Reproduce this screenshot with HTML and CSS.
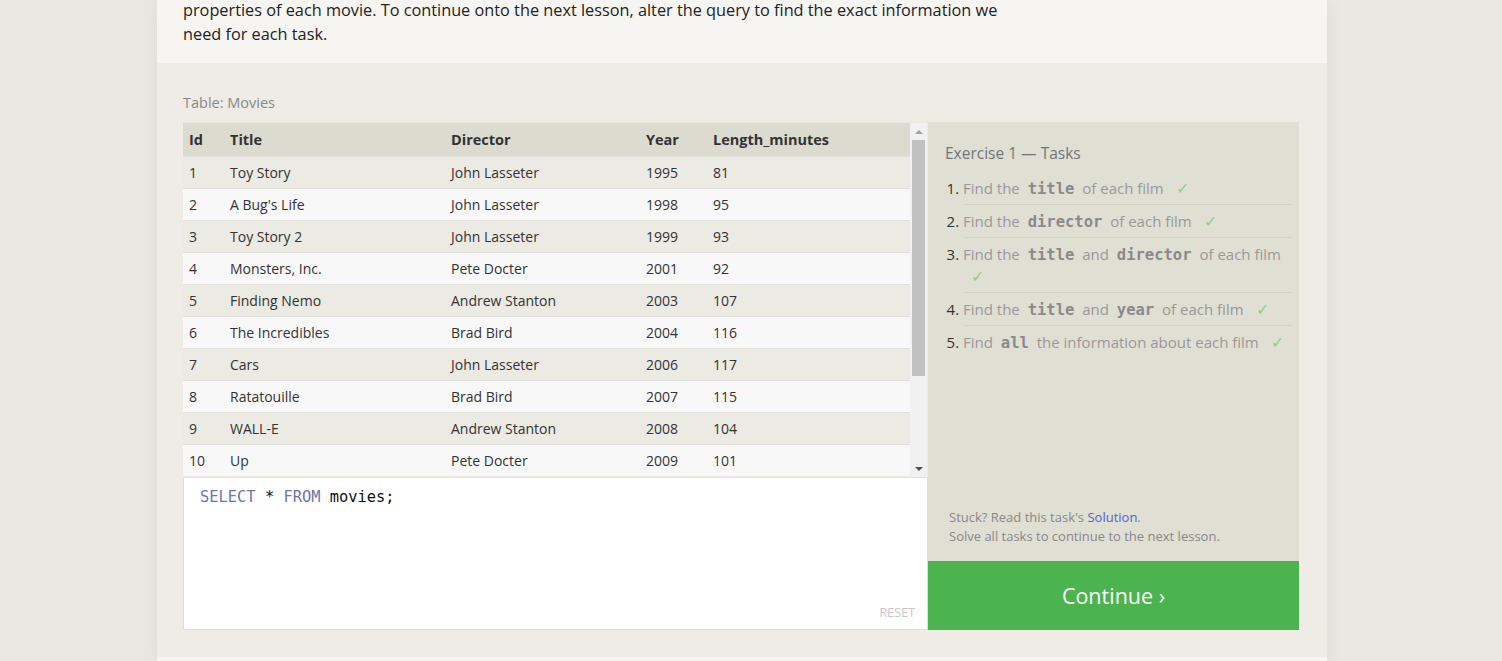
FILE: index.html
```html
<!DOCTYPE html>
<html lang="en">
<head>
<meta charset="utf-8">
<title>SQL Lesson 1</title>
<link rel="stylesheet" href="styles.css">
</head>
<body>
<div class="page">
  <section class="intro">
    <p class="intro-text">properties of each movie. To continue onto the next lesson, alter the query to find the exact information we<br>need for each task.</p>
  </section>
  <section class="exercise">
    <div class="table-caption">Table: Movies</div>
    <div class="workspace">
      <div class="left-col">
        <div class="table-view">
          <div class="table-clip">
            <table class="data">
              <colgroup><col class="c-id"><col class="c-title"><col class="c-dir"><col class="c-year"><col class="c-len"></colgroup>
              <thead>
                <tr><th>Id</th><th>Title</th><th>Director</th><th>Year</th><th>Length_minutes</th></tr>
              </thead>
              <tbody>
                <tr><td>1</td><td>Toy Story</td><td>John Lasseter</td><td>1995</td><td>81</td></tr>
                <tr><td>2</td><td>A Bug's Life</td><td>John Lasseter</td><td>1998</td><td>95</td></tr>
                <tr><td>3</td><td>Toy Story 2</td><td>John Lasseter</td><td>1999</td><td>93</td></tr>
                <tr><td>4</td><td>Monsters, Inc.</td><td>Pete Docter</td><td>2001</td><td>92</td></tr>
                <tr><td>5</td><td>Finding Nemo</td><td>Andrew Stanton</td><td>2003</td><td>107</td></tr>
                <tr><td>6</td><td>The Incredibles</td><td>Brad Bird</td><td>2004</td><td>116</td></tr>
                <tr><td>7</td><td>Cars</td><td>John Lasseter</td><td>2006</td><td>117</td></tr>
                <tr><td>8</td><td>Ratatouille</td><td>Brad Bird</td><td>2007</td><td>115</td></tr>
                <tr><td>9</td><td>WALL-E</td><td>Andrew Stanton</td><td>2008</td><td>104</td></tr>
                <tr><td>10</td><td>Up</td><td>Pete Docter</td><td>2009</td><td>101</td></tr>
              </tbody>
            </table>
          </div>
          <div class="scrollbar">
            <div class="sb-btn"><span class="tri-up"></span></div>
            <div class="sb-track"><div class="sb-thumb"></div></div>
            <div class="sb-btn"><span class="tri-down"></span></div>
          </div>
        </div>
        <div class="editor">
          <div class="code"><span class="kw">SELECT</span> * <span class="kw">FROM</span> movies;</div>
          <div class="reset">RESET</div>
        </div>
      </div>
      <aside class="tasks">
        <div class="tasks-body">
          <h3 class="tasks-title">Exercise 1 — Tasks</h3>
          <ol class="task-list">
            <li>Find the <code>title</code> of each film <span class="check">✓</span></li>
            <li>Find the <code>director</code> of each film <span class="check">✓</span></li>
            <li>Find the <code>title</code> and <code>director</code> of each film <span class="check">✓</span></li>
            <li>Find the <code>title</code> and <code>year</code> of each film <span class="check">✓</span></li>
            <li>Find <code>all</code> the information about each film <span class="check">✓</span></li>
          </ol>
        </div>
        <div class="stuck">
          <div>Stuck? Read this task's <a href="#" class="link">Solution</a>.</div>
          <div>Solve all tasks to continue to the next lesson.</div>
        </div>
        <button class="continue">Continue ›</button>
      </aside>
    </div>
  </section>
  <div class="footer-strip"></div>
</div>
</body>
</html>
```

FILE: styles.css
```css
html, body {
  margin: 0;
  padding: 0;
}
body {
  background: #ebe7e3;
  font-family: "Open Sans", "Noto Sans", sans-serif;
  color: #333;
  overflow: hidden;
}
.page {
  width: 1170px;
  margin-left: 157px;
  box-shadow: 0 0 18px rgba(0, 0, 0, 0.06);
}
.intro {
  background: #f6f5f1;
  height: 63px;
  padding: 0 26px;
  box-sizing: border-box;
}
.intro-text {
  margin: 0;
  position: relative;
  top: -2px;
  font-size: 16.3px;
  line-height: 24px;
  color: #222;
}
.exercise {
  background: #efece6;
  padding: 26px 28px 27px 26px;
}
.table-caption {
  font-size: 14.5px;
  color: #888;
  line-height: 20px;
  margin-top: 4px;
  margin-bottom: 9px;
}
.workspace {
  display: flex;
  height: 508px;
}
.left-col {
  width: 745px;
  display: flex;
  flex-direction: column;
}
.table-view {
  height: 355px;
  display: flex;
  border-top: 1px solid #e8e7e0;
  box-sizing: border-box;
}
.table-clip {
  width: 727px;
  overflow: hidden;
}
.data {
  width: 727px;
  table-layout: fixed;
  border-collapse: collapse;
  font-size: 14px;
}
.c-id { width: 41px; }
.c-title { width: 221px; }
.c-dir { width: 195px; }
.c-year { width: 67px; }
.c-len { width: 203px; }
.data th {
  background: #dcdbd0;
  text-align: left;
  font-weight: 700;
  font-size: 14.5px;
  height: 33px;
  padding: 0 6px;
  color: #333;
}
.data td {
  height: 31px;
  padding: 0 6px;
  border-top: 1px solid #e0dfda;
  color: #333;
}
.data tbody tr:nth-child(odd) td { background: #ebeae3; }
.data tbody tr:nth-child(even) td { background: #f8f8f8; }
.scrollbar {
  width: 17px;
  background: #f1f1f1;
  display: flex;
  flex-direction: column;
}
.sb-btn {
  height: 17px;
  display: flex;
  align-items: center;
  justify-content: center;
}
.tri-up {
  width: 0; height: 0;
  border-left: 4px solid transparent;
  border-right: 4px solid transparent;
  border-bottom: 4px solid #a3a3a3;
}
.tri-down {
  width: 0; height: 0;
  border-left: 4px solid transparent;
  border-right: 4px solid transparent;
  border-top: 4px solid #505050;
}
.sb-track {
  flex: 1;
  padding: 0 2px;
}
.sb-thumb {
  height: 236px;
  background: #c1c1c1;
}
.editor {
  flex: 1;
  background: #fff;
  border: 1px solid #e0ded8;
  border-top: 1px solid #e3e2dc;
  display: flex;
  flex-direction: column;
  justify-content: space-between;
  padding: 9px 12px 8px 16px;
}
.code {
  font-family: "DejaVu Sans Mono", "Liberation Mono", monospace;
  font-size: 15.4px;
  line-height: 20px;
  color: #111;
}
.kw { color: #6d76a8; }
.reset {
  align-self: flex-end;
  font-size: 13px;
  color: #c8c8c8;
  letter-spacing: -0.2px;
}
.tasks {
  width: 371px;
  background: #e0dfd4;
  display: flex;
  flex-direction: column;
}
.tasks-body {
  flex: 1;
  padding: 20px 7px 0 17px;
}
.tasks-title {
  margin: 0 0 8px 0;
  font-weight: 400;
  font-size: 15.5px;
  line-height: 22px;
  color: #72767a;
}
.task-list {
  margin: 0;
  padding-left: 18px;
  font-size: 15px;
  color: #999;
}
.task-list li {
  line-height: 22px;
  padding: 5px 0;
  border-bottom: 1px solid #d4d3c8;
}
.task-list li:last-child { border-bottom: none; }
.task-list li::marker {
  color: #333;
}
.task-list code {
  font-family: "DejaVu Sans Mono", "Liberation Mono", monospace;
  font-weight: 700;
  font-size: 15.5px;
  line-height: 0;
  color: #8a8a8a;
  margin: 0 4px;
}
.check {
  color: #8fce8f;
  font-size: 16px;
  line-height: 0;
  margin-left: 8px;
}
.stuck {
  padding: 0 21px 15px 21px;
  font-size: 13px;
  line-height: 19px;
  color: #888;
}
.link {
  color: #5061d8;
  text-decoration: none;
}
.continue {
  height: 69px;
  border: none;
  background: #4bb44f;
  color: #fff;
  font-family: inherit;
  font-size: 21.5px;
  cursor: pointer;
  padding: 0;
}
.footer-strip {
  height: 10px;
  background: #f6f5f1;
}
```
